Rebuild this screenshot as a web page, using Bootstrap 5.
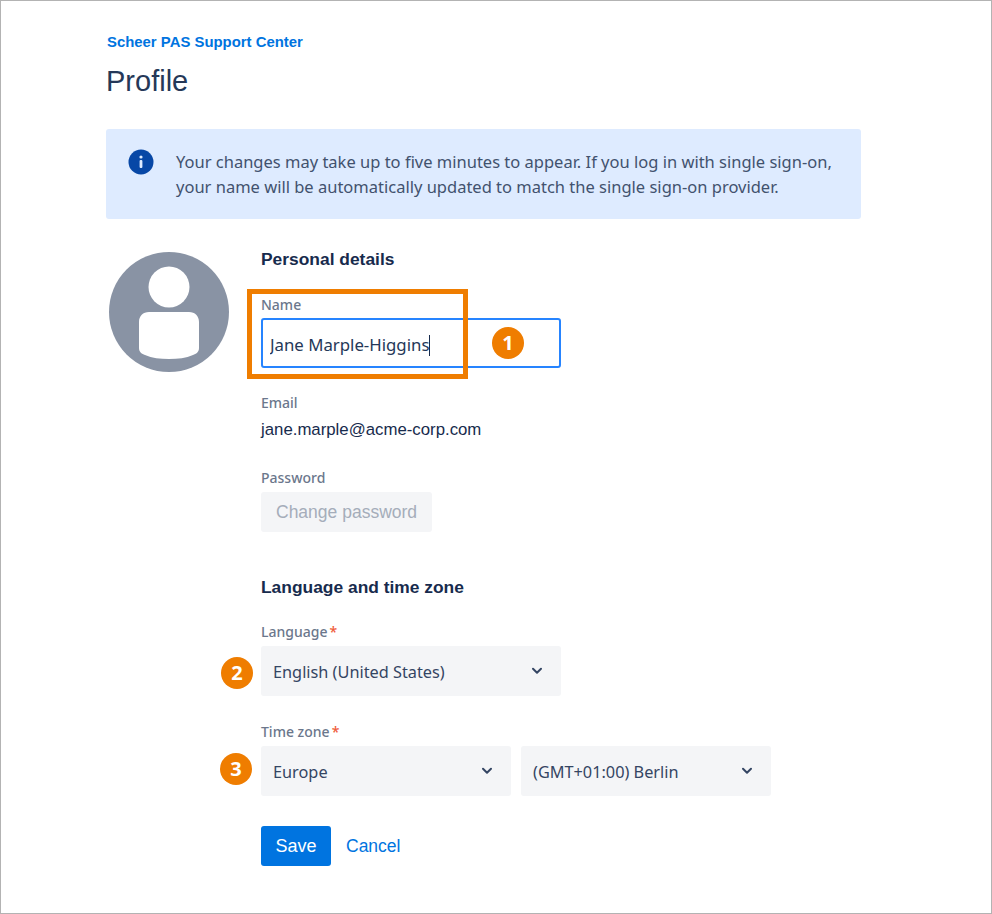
<!DOCTYPE html>
<html lang="en">
<head>
  <meta charset="UTF-8">
  <title>Profile - Scheer PAS Support Center</title>
  <link href="https://cdn.jsdelivr.net/npm/bootstrap@5.3.0/dist/css/bootstrap.min.css" rel="stylesheet">
  <style>
    html, body { height: 100%; }
    body { background: #fff; color: #172b4d; font-family: "Liberation Sans", Arial, sans-serif; }
    .page-frame { position: relative; height: 914px; border: 1px solid #b3b3b3; padding: 33px 130px 0 105px; overflow: hidden; }
    .crumb { display: block; height: 16px; padding-left: 1px; font-size: 14.9px; line-height: 16px; font-weight: 700; color: #0074e0; text-decoration: none; }
    .page-title { margin: 14px 0 31px; font-size: 29px; line-height: 34px; font-weight: 400; color: #253858; }
    .info-banner { height: 90px; padding: 20px 22px; background: #deebff; border-radius: 3px; gap: 22px; }
    .info-text { font-family: "Noto Sans", sans-serif; font-size: 16.5px; line-height: 25px; color: #42526e; }
    .avatar-col { width: 155px; padding: 33px 0 0 3px; flex: none; }
    .section-title { margin: 0; font-size: 17.4px; line-height: 20px; font-weight: 700; color: #172b4d; }
    .field-label { display: block; margin: 0; font-family: "Noto Sans", sans-serif; font-size: 14px; line-height: 18px; font-weight: 500; color: #6b778c; }
    .field-label em { color: #ef5c3a; font-style: normal; margin-left: 2px; }
    .text-field { width: 300px; height: 50px; padding: 2px 7px 0; margin-top: 4px; font-family: "Noto Sans", sans-serif; font-size: 16.8px; color: #253858; border: 2px solid #2684ff; border-radius: 3px; box-shadow: none; }
    .text-field:focus { border-color: #2684ff; box-shadow: none; }
    .caret-line { position: absolute; left: 168px; top: 17px; width: 1px; height: 21px; background: #172b4d; }
    .email-value { font-size: 16.8px; line-height: 20px; color: #172b4d; margin-top: 8px; }
    .btn-change { height: 40px; padding: 0 15px; margin-top: 5px; font-size: 17.5px; line-height: 38px; color: #a5adba; background: #f4f5f7; border: 0; border-radius: 3px; }
    .btn-change:disabled { color: #a5adba; background: #f4f5f7; opacity: 1; }
    .pick-row { margin-top: 5px; }
    .pick { height: 50px; padding: 2px 36px 0 12px; font-family: "Noto Sans", sans-serif; font-size: 16.3px; color: #344563; background-color: #f4f5f7; border: 0; border-radius: 3px;
      background-image: url("data:image/svg+xml,%3Csvg xmlns='http://www.w3.org/2000/svg' viewBox='0 0 12 8'%3E%3Cpath d='M2 1.8l4 4 4-4' fill='none' stroke='%23344563' stroke-width='2' stroke-linecap='round' stroke-linejoin='round'/%3E%3C/svg%3E");
      background-size: 12px 8px; background-position: right 18px center; }
    .w-single { width: 300px; }
    .w-half { width: 250px; }
    .btn-save { width: 70px; height: 40px; padding: 0; font-size: 18px; color: #fff; background: #0074e0; border: 0; border-radius: 3px; }
    .link-cancel { font-size: 17.5px; color: #0074e0; text-decoration: none; }
    .callout-box { position: absolute; left: 246px; top: 288px; width: 221px; height: 90px; border: 5px solid #ef7d00; pointer-events: none; }
    .step-dot { position: absolute; width: 32px; height: 32px; border-radius: 50%; background: #ef7d00; color: #fff; font-family: "Open Sans", sans-serif; font-size: 20px; line-height: 32px; font-weight: 700; text-align: center; }
  </style>
</head>
<body>

<div class="page-frame">
  <a class="crumb" href="#">Scheer PAS Support Center</a>
  <h1 class="page-title">Profile</h1>

  <div class="info-banner d-flex">
    <svg width="26" height="26" viewBox="0 0 26 26" class="flex-shrink-0" aria-hidden="true">
      <circle cx="13" cy="13" r="12.5" fill="#0747a6"/>
      <rect x="11.6" y="11" width="2.8" height="8" rx="1" fill="#deebff"/>
      <circle cx="13" cy="8" r="1.6" fill="#deebff"/>
    </svg>
    <div class="info-text">Your changes may take up to five minutes to appear. If you log in with single sign-on,<br>your name will be automatically updated to match the single sign-on provider.</div>
  </div>

  <div class="d-flex">
    <div class="avatar-col">
      <svg width="120" height="120" viewBox="0 0 120 120" aria-hidden="true">
        <circle cx="60" cy="60" r="60" fill="#8993a4"/>
        <circle cx="60" cy="35" r="20.5" fill="#fff"/>
        <path d="M30 70c0-6 4-10 10-10h40c6 0 10 4 10 10v26c0 4-3 6-6 7-7 3-15 4-24 4s-17-1-24-4c-3-1-6-3-6-7z" fill="#fff"/>
      </svg>
    </div>

    <form class="flex-grow-1" onsubmit="return false">
      <h2 class="section-title" style="margin-top:30px">Personal details</h2>

      <div style="margin-top:27px">
        <label class="field-label" for="fullName">Name</label>
        <div class="position-relative">
          <input id="fullName" class="form-control text-field" type="text" value="Jane Marple-Higgins">
          <span class="caret-line"></span>
        </div>
      </div>

      <div style="margin-top:26px">
        <div class="field-label">Email</div>
        <div class="email-value">jane.marple@acme-corp.com</div>
      </div>

      <div style="margin-top:29px">
        <div class="field-label">Password</div>
        <button class="btn btn-change" type="button" disabled>Change password</button>
      </div>

      <h2 class="section-title" style="margin-top:45px">Language and time zone</h2>

      <div style="margin-top:26px">
        <label class="field-label" for="lang">Language<em>*</em></label>
        <select id="lang" class="form-select pick w-single pick-row">
          <option>English (United States)</option>
        </select>
      </div>

      <div style="margin-top:27px">
        <label class="field-label" for="region">Time zone<em>*</em></label>
        <div class="d-flex pick-row" style="gap:10px">
          <select id="region" class="form-select pick w-half"><option>Europe</option></select>
          <select class="form-select pick w-half" aria-label="City"><option>(GMT+01:00) Berlin</option></select>
        </div>
      </div>

      <div class="d-flex align-items-center" style="margin-top:30px;gap:15px">
        <button class="btn btn-save" type="submit">Save</button>
        <a class="link-cancel" href="#">Cancel</a>
      </div>
    </form>
  </div>

  <div class="callout-box"></div>
  <span class="step-dot" style="left:491px;top:326px">1</span>
  <span class="step-dot" style="left:220px;top:656px">2</span>
  <span class="step-dot" style="left:219px;top:752px">3</span>
</div>

<script src="https://cdn.jsdelivr.net/npm/bootstrap@5.3.0/dist/js/bootstrap.bundle.min.js"></script>
</body>
</html>
